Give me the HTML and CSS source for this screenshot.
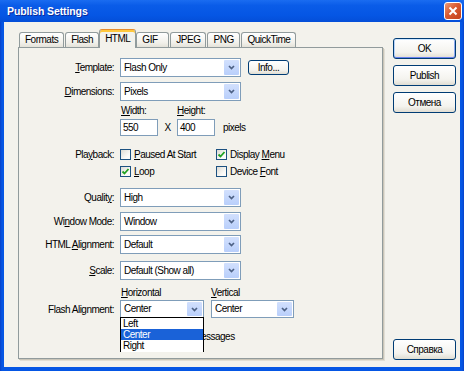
FILE: index.html
```html
<!DOCTYPE html>
<html>
<head>
    <link rel="stylesheet" href="styles.css">
</head>
<body>
<div class="window">
    <div class="titlebar">
        <span class="title">Publish Settings</span>
        <span class="close">
            <svg width="10" height="10" viewBox="0 0 10 10"><path d="M1.5 1.5L8.5 8.5M8.5 1.5L1.5 8.5" stroke="#fff" stroke-width="2" fill="none"/></svg>
        </span>
    </div>

    <div class="body">
        <div class="left">
            <div class="tabs">
                <div class="tab">Formats</div>
                <div class="tab">Flash</div>
                <div class="tab tab-active">HTML</div>
                <div class="tab">GIF</div>
                <div class="tab">JPEG</div>
                <div class="tab">PNG</div>
                <div class="tab">QuickTime</div>
            </div>

            <div class="panel">
                <div class="row row-template">
                    <span class="lbl"><u>T</u>emplate:</span>
                    <div class="combo">
                        <span class="combo-text">Flash Only</span>
                        <span class="combo-btn"><svg width="7" height="5" viewBox="0 0 7 5"><path d="M1 1L3.5 3.5L6 1" stroke="#4d6185" stroke-width="1.7" fill="none"/></svg></span>
                    </div>
                    <button class="btn btn-small">Info...</button>
                </div>

                <div class="row row-dims">
                    <span class="lbl"><u>D</u>imensions:</span>
                    <div class="combo">
                        <span class="combo-text">Pixels</span>
                        <span class="combo-btn"><svg width="7" height="5" viewBox="0 0 7 5"><path d="M1 1L3.5 3.5L6 1" stroke="#4d6185" stroke-width="1.7" fill="none"/></svg></span>
                    </div>
                </div>

                <div class="row row-size-labels">
                    <span class="lbl"></span>
                    <span class="size-lbl"><u>W</u>idth:</span>
                    <span><u>H</u>eight:</span>
                </div>

                <div class="row row-size">
                    <span class="lbl"></span>
                    <span class="field">550</span>
                    <span class="times">X</span>
                    <span class="field">400</span>
                    <span class="unit">pixels</span>
                </div>

                <div class="row row-playback">
                    <span class="lbl">Pla<u>y</u>back:</span>
                    <div class="checks">
                        <span class="opt"><span class="check"></span><span><u>P</u>aused At Start</span></span>
                        <span class="opt"><span class="check check-on"><svg width="9" height="9" viewBox="0 0 9 9"><path d="M1.5 4.5L3.5 6.5L7.5 2" stroke="#21a121" stroke-width="1.8" fill="none"/></svg></span><span>Display <u>M</u>enu</span></span>
                        <span class="opt"><span class="check check-on"><svg width="9" height="9" viewBox="0 0 9 9"><path d="M1.5 4.5L3.5 6.5L7.5 2" stroke="#21a121" stroke-width="1.8" fill="none"/></svg></span><span><u>L</u>oop</span></span>
                        <span class="opt"><span class="check"></span><span>Device <u>F</u>ont</span></span>
                    </div>
                </div>

                <div class="row row-quality">
                    <span class="lbl">Qualit<u>y</u>:</span>
                    <div class="combo">
                        <span class="combo-text">High</span>
                        <span class="combo-btn"><svg width="7" height="5" viewBox="0 0 7 5"><path d="M1 1L3.5 3.5L6 1" stroke="#4d6185" stroke-width="1.7" fill="none"/></svg></span>
                    </div>
                </div>

                <div class="row row-window">
                    <span class="lbl">Wi<u>n</u>dow Mode:</span>
                    <div class="combo">
                        <span class="combo-text">Window</span>
                        <span class="combo-btn"><svg width="7" height="5" viewBox="0 0 7 5"><path d="M1 1L3.5 3.5L6 1" stroke="#4d6185" stroke-width="1.7" fill="none"/></svg></span>
                    </div>
                </div>

                <div class="row row-html-align">
                    <span class="lbl">HTML <u>A</u>lignment:</span>
                    <div class="combo">
                        <span class="combo-text">Default</span>
                        <span class="combo-btn"><svg width="7" height="5" viewBox="0 0 7 5"><path d="M1 1L3.5 3.5L6 1" stroke="#4d6185" stroke-width="1.7" fill="none"/></svg></span>
                    </div>
                </div>

                <div class="row row-scale">
                    <span class="lbl"><u>S</u>cale:</span>
                    <div class="combo">
                        <span class="combo-text">Default (Show all)</span>
                        <span class="combo-btn"><svg width="7" height="5" viewBox="0 0 7 5"><path d="M1 1L3.5 3.5L6 1" stroke="#4d6185" stroke-width="1.7" fill="none"/></svg></span>
                    </div>
                </div>

                <div class="row row-align-labels">
                    <span class="lbl"></span>
                    <span class="sub-lbl"><u>H</u>orizontal</span>
                    <span><u>V</u>ertical</span>
                </div>

                <div class="row row-flash-align">
                    <span class="lbl">Flash Alignment:</span>
                    <div class="combo combo-half">
                        <span class="combo-text">Center</span>
                        <span class="combo-btn"><svg width="7" height="5" viewBox="0 0 7 5"><path d="M1 1L3.5 3.5L6 1" stroke="#4d6185" stroke-width="1.7" fill="none"/></svg></span>
                        <div class="dropdown">
                            <div class="dd-item">Left</div>
                            <div class="dd-item dd-item-active">Center</div>
                            <div class="dd-item">Right</div>
                        </div>
                    </div>
                    <div class="combo combo-half combo-vert">
                        <span class="combo-text">Center</span>
                        <span class="combo-btn"><svg width="7" height="5" viewBox="0 0 7 5"><path d="M1 1L3.5 3.5L6 1" stroke="#4d6185" stroke-width="1.7" fill="none"/></svg></span>
                    </div>
                </div>

                <div class="row row-warn">
                    <span class="lbl"></span>
                    <span class="opt"><span class="check"></span><span>Show warning messages</span></span>
                </div>
            </div>
        </div>

        <div class="buttons">
            <button class="btn btn-default">OK</button>
            <button class="btn">Publish</button>
            <button class="btn">Отмена</button>
            <button class="btn btn-help">Справка</button>
        </div>
    </div>
</div>
</body>
</html>
```

FILE: styles.css
```css
* {
    box-sizing: border-box;
}

html, body {
    margin: 0;
}

body {
    width: 464px;
    height: 371px;
    overflow: hidden;
    font-family: "Liberation Sans", Arial, sans-serif;
    font-size: 10px;
    letter-spacing: -0.5px;
    color: #000;
}

.window {
    height: 371px;
    display: flex;
    flex-direction: column;
    background: linear-gradient(90deg, #0841c8, #0556e4 2px, #0556e4 calc(100% - 2px), #0841c8);
    padding-bottom: 4px;
}

.titlebar {
    height: 22px;
    display: flex;
    align-items: center;
    justify-content: space-between;
    padding: 0 2px 0 7px;
    background: linear-gradient(#1a6cf0, #0a5ce8 25%, #0556e4 70%, #044ed8);
}

.title {
    color: #fff;
    font-weight: bold;
    font-size: 10.5px;
    letter-spacing: -0.1px;
    text-shadow: 1px 1px #0b2a9c;
}

.close {
    width: 18px;
    height: 18px;
    border: 1px solid #fff;
    border-radius: 3px;
    background: linear-gradient(135deg, #ec9a77, #d85a32 45%, #c4401a);
    display: flex;
    align-items: center;
    justify-content: center;
}

.body {
    flex: 1;
    margin: 0 4px;
    background: #f3f2ec;
    display: flex;
    padding: 10px 4px 7px 14px;
}

.left {
    width: 365px;
}

/* tabs */
.tabs {
    display: flex;
    align-items: flex-end;
    gap: 1px;
    height: 15px;
    padding-left: 1px;
}

.tab {
    height: 15px;
    min-width: 33px;
    padding: 0 5px;
    border: 1px solid #919b9c;
    border-bottom: none;
    border-radius: 3px 3px 0 0;
    background: linear-gradient(#ffffff, #f1f0ea 70%, #e4e2d9);
    line-height: 14px;
    white-space: nowrap;
}

.tab-active {
    height: 19px;
    margin: 0 -1px -1px;
    position: relative;
    z-index: 1;
    border-top: 1px solid #e68b2c;
    box-shadow: inset 0 2px #ffc83c;
    background: #f3f2ec;
    padding-top: 2px;
    line-height: 14px;
}

.panel {
    height: 312px;
    border: 1px solid #919b9c;
    background: #f3f2ec;
    box-shadow: 1px 1px #c9c5b8, 2px 2px #e1ded4;
    padding-top: 10px;
}

/* rows */
.row {
    display: flex;
    align-items: center;
}

.lbl {
    width: 95px;
    margin-right: 6px;
    flex-shrink: 0;
    text-align: right;
    white-space: nowrap;
}

.row-dims { margin-top: 5px; }
.row-size-labels { margin-top: 3px; height: 13px; }
.row-size { margin-top: 2px; }
.row-playback { margin-top: 12px; align-items: flex-start; }
.row-quality { margin-top: 10px; }
.row-window { margin-top: 5px; }
.row-html-align { margin-top: 4px; }
.row-scale { margin-top: 7px; }
.row-align-labels { margin-top: 6px; height: 12px; }
.row-flash-align { margin-top: 2px; }
.row-warn { margin-top: 12px; }

.row-playback .lbl {
    line-height: 13px;
}

/* combo boxes */
.combo {
    position: relative;
    display: flex;
    width: 121px;
    height: 19px;
    border: 1px solid #7f9db9;
    background: #fff;
}

.combo-half {
    width: 84px;
    height: 18px;
}

.combo-vert {
    width: 83px;
    margin-left: 7px;
}

.combo-text {
    flex: 1;
    padding-left: 3px;
    line-height: 17px;
    white-space: nowrap;
    overflow: hidden;
}

.combo-half .combo-text {
    line-height: 16px;
}

.combo-btn {
    width: 15px;
    margin: 1px;
    border-radius: 1px;
    background: linear-gradient(#d2e0fd, #b9cffb);
    display: flex;
    align-items: center;
    justify-content: center;
}

.dropdown {
    position: absolute;
    left: -1px;
    top: 16px;
    width: 84px;
    height: 35px;
    border: 1px solid #000;
    border-bottom: none;
    background: #fff;
    z-index: 2;
}

.dd-item {
    height: 11px;
    line-height: 11px;
    padding-left: 2px;
}

.dd-item-active {
    background: #1a62d8;
    color: #fff;
}

/* size fields */
.size-lbl {
    width: 57px;
    padding-left: 1px;
}

.sub-lbl {
    width: 91px;
    padding-left: 1px;
}

.field {
    width: 38px;
    height: 17px;
    border: 1px solid #7f9db9;
    background: #fff;
    padding-left: 2px;
    line-height: 15px;
}

.times {
    width: 19px;
    text-align: center;
}

.unit {
    margin-left: 8px;
}

/* checkboxes */
.checks {
    display: grid;
    grid-template-columns: 96px auto;
    row-gap: 4px;
}

.opt {
    display: flex;
    align-items: center;
    gap: 3px;
    height: 13px;
    white-space: nowrap;
}

.check {
    width: 11px;
    height: 11px;
    border: 1px solid #1c5180;
    background: linear-gradient(135deg, #dcdbd4, #fbfbf9 70%);
    display: flex;
    align-items: center;
    justify-content: center;
}

/* buttons */
.buttons {
    width: 63px;
    margin-left: 10px;
    padding-top: 6px;
    display: flex;
    flex-direction: column;
    gap: 6px;
}

.btn {
    width: 63px;
    height: 21px;
    padding: 0;
    border: 1px solid #003c74;
    border-radius: 3px;
    background: linear-gradient(#ffffff, #f4f3ee 70%, #e0ddd2);
    font: inherit;
    letter-spacing: inherit;
    color: #000;
}

.btn-default {
    box-shadow: inset 0 1px #cee7ff, inset 0 -1px #6982ee, inset 1px 0 #b8d2f8, inset -1px 0 #8ca9f0;
}

.btn-small {
    width: 41px;
    height: 15px;
    margin-left: 7px;
    line-height: 12px;
}

.btn-help {
    margin-top: auto;
}
```
